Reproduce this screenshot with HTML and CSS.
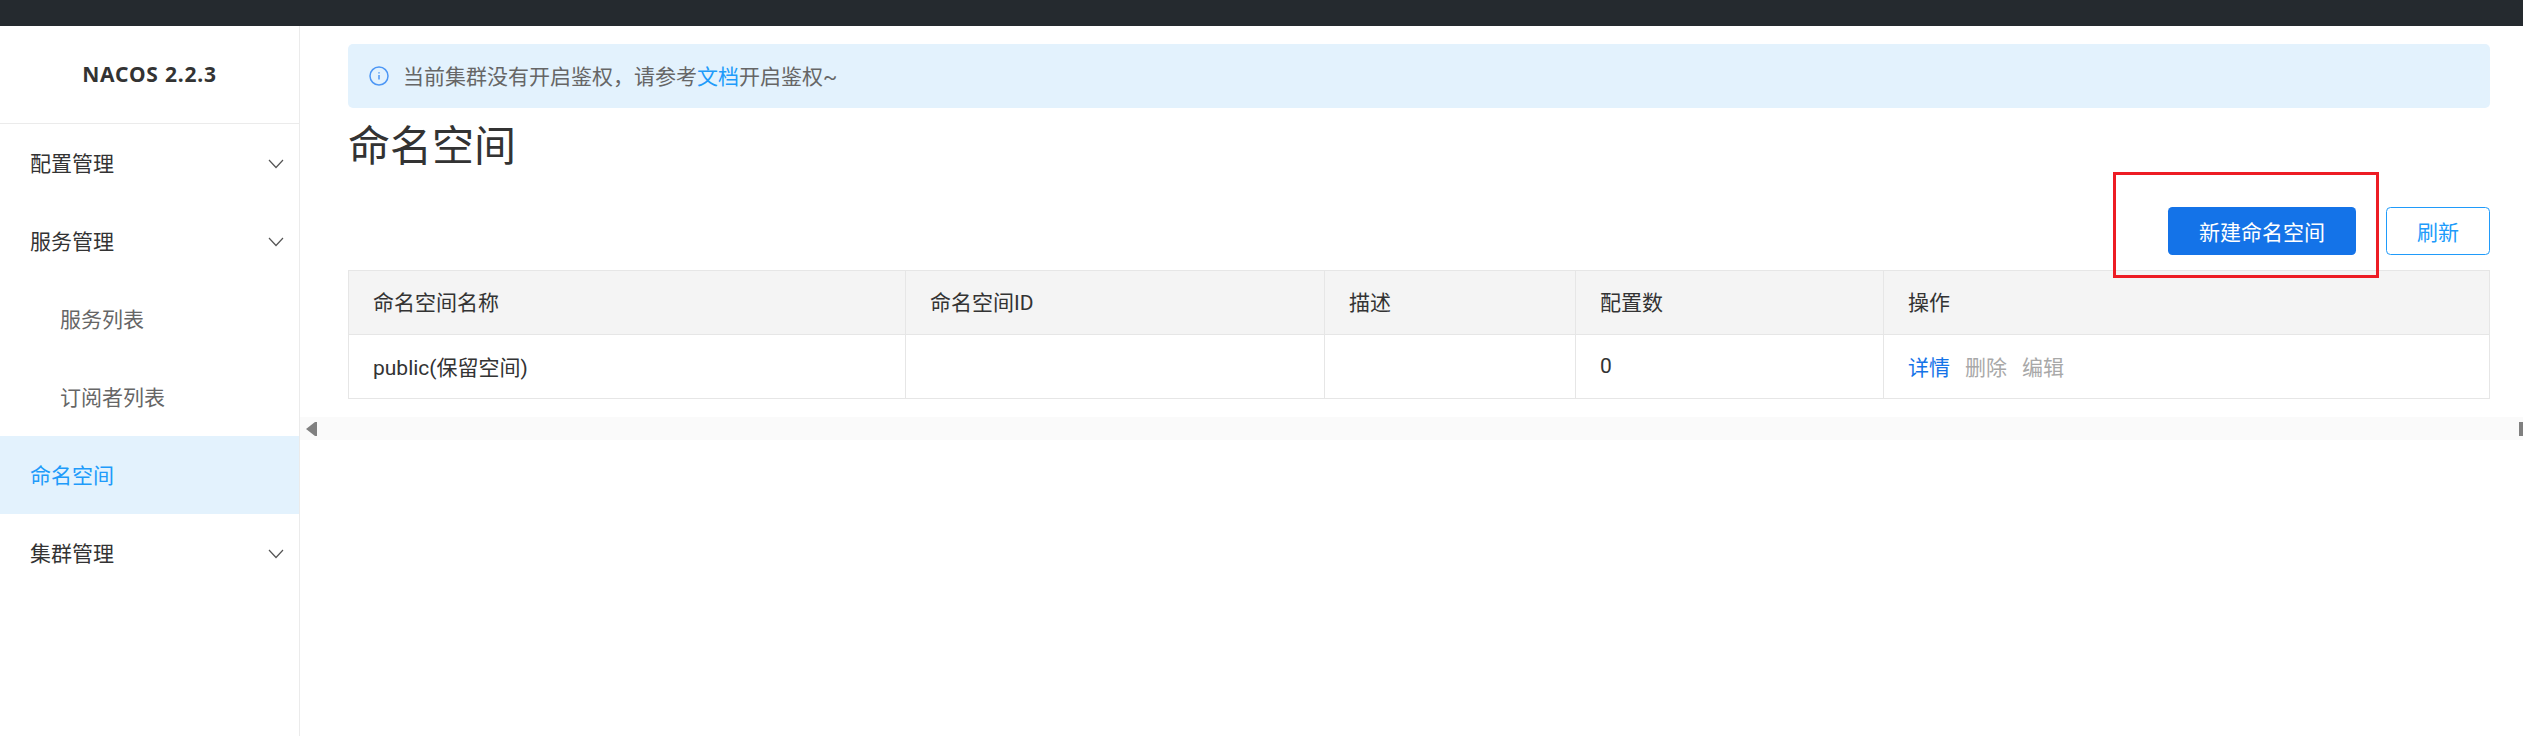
FILE: index.html
```html
<!DOCTYPE html>
<html lang="zh-CN">
<head>
<meta charset="utf-8">
<title>NACOS</title>
<link rel="stylesheet" href="styles.css">
</head>
<body>
<div class="topbar"></div>
<div class="shell">
  <aside class="sidebar">
    <div class="brand">NACOS 2.2.3</div>
    <nav class="menu">
      <div class="item"><span>配置管理</span><svg class="chev" viewBox="0 0 16 10"><path d="M1 1l7 7.5L15 1"/></svg></div>
      <div class="item"><span>服务管理</span><svg class="chev" viewBox="0 0 16 10"><path d="M1 1l7 7.5L15 1"/></svg></div>
      <div class="item sub"><span>服务列表</span></div>
      <div class="item sub"><span>订阅者列表</span></div>
      <div class="item active"><span>命名空间</span></div>
      <div class="item"><span>集群管理</span><svg class="chev" viewBox="0 0 16 10"><path d="M1 1l7 7.5L15 1"/></svg></div>
    </nav>
  </aside>
  <main class="main">
    <div class="content">
      <div class="alert">
        <svg class="info" viewBox="0 0 20 20"><circle cx="10" cy="10" r="9"/><path d="M10 9v4.6M10 6.2v1.3"/></svg>
        <span class="alert-text">当前集群没有开启鉴权，请参考<a class="link">文档</a>开启鉴权~</span>
      </div>
      <h1 class="title">命名空间</h1>
      <div class="toolbar">
        <button class="btn primary">新建命名空间</button>
        <button class="btn ghost">刷新</button>
        <div class="mark"></div>
      </div>
      <table class="grid">
        <thead>
          <tr><th class="c1">命名空间名称</th><th class="c2">命名空间ID</th><th class="c3">描述</th><th class="c4">配置数</th><th class="c5">操作</th></tr>
        </thead>
        <tbody>
          <tr><td>public(保留空间)</td><td></td><td></td><td>0</td><td><a class="link-strong">详情</a><a class="muted">删除</a><a class="muted">编辑</a></td></tr>
        </tbody>
      </table>
    </div>
    <div class="hscroll">
      <svg class="arrow" viewBox="0 0 11 14"><path d="M11 0v14H9L0 7l9-7z"/></svg>
      <svg class="arrow" viewBox="0 0 4 14"><path d="M0 0h4v14H0z"/></svg>
    </div>
  </main>
</div>
</body>
</html>
```
FILE: styles.css
```css
* { box-sizing: border-box; }
html, body { margin: 0; height: 100%; overflow: hidden; background: #fff; }
body {
  font-family: Roboto, "Noto Sans CJK SC", sans-serif;
  font-size: 21px;
  color: #333;
  display: flex;
  flex-direction: column;
}
.topbar { height: 26px; flex: none; background: #252a2f; }
.shell { flex: 1; display: flex; min-height: 0; }
.sidebar { width: 300px; flex: none; border-right: 1px solid #ebebeb; }
.brand {
  height: 98px;
  padding-top: 32px;
  display: flex;
  align-items: flex-start;
  justify-content: center;
  border-bottom: 1px solid #ebebeb;
  font-family: "Noto Sans", sans-serif;
  font-weight: 700;
  font-size: 21px;
  line-height: 32px;
  letter-spacing: 0.8px;
  color: #333;
}
.item {
  height: 78px;
  padding: 2px 15px 0 30px;
  display: flex;
  align-items: center;
  justify-content: space-between;
  color: #333;
  line-height: 30px;
}
.sub { padding-left: 60px; color: #666; }
.active { background: #e3f2fd; color: #209bfa; }
.chev { width: 16px; height: 10px; fill: none; stroke: #555; stroke-width: 1.2; }
.main { flex: 1; min-width: 0; }
.content { padding: 18px 33px 0 48px; }
.alert {
  height: 64px;
  padding-left: 21px;
  display: flex;
  align-items: center;
  gap: 14px;
  border-radius: 5px;
  background: #e3f2fd;
  color: #666;
}
.alert-text { margin-bottom: 2px; }
.info { width: 20px; height: 20px; flex: none; fill: none; stroke: #4d97f5; stroke-width: 1.5; }
.link { color: #209bfa; }
.title {
  margin: 0;
  height: 99px;
  padding-top: 7px;
  font-size: 42px;
  font-weight: 400;
  line-height: 63px;
  color: #333;
}
.toolbar {
  position: relative;
  display: flex;
  justify-content: flex-end;
  gap: 30px;
  margin-bottom: 15px;
}
.btn {
  height: 48px;
  border-radius: 4.5px;
  font: inherit;
  padding: 0;
}
.primary { width: 188px; border: 0; background: #1473e8; color: #fff; }
.ghost { width: 104px; border: 1.5px solid #209bfa; background: #fff; color: #209bfa; }
.mark {
  position: absolute;
  right: 111px;
  top: -35px;
  width: 266px;
  height: 106px;
  border: 3px solid #ed1c24;
  z-index: 2;
}
.grid {
  width: 100%;
  table-layout: fixed;
  border-collapse: collapse;
  border: 1px solid #e6e6e6;
}
.grid th, .grid td {
  height: 64px;
  padding: 0 0 3px 24px;
  border: 1px solid #e6e6e6;
  font-weight: 400;
  text-align: left;
  color: #333;
}
.grid td { padding-bottom: 2px; }
.grid th { background: #f4f4f4; }
.c1 { width: 557px; }
.c2 { width: 419px; }
.c3 { width: 251px; }
.c4 { width: 308px; }
.link-strong { color: #1473e8; margin-right: 15px; }
.muted { color: #a8a8a8; margin-right: 15px; }
.hscroll {
  margin-top: 18px;
  height: 23px;
  padding: 0 0 0 6px;
  display: flex;
  align-items: center;
  justify-content: space-between;
  background: #fafafa;
}
.arrow { height: 14px; width: 11px; fill: #808080; }
.arrow + .arrow { width: 4px; }
```
